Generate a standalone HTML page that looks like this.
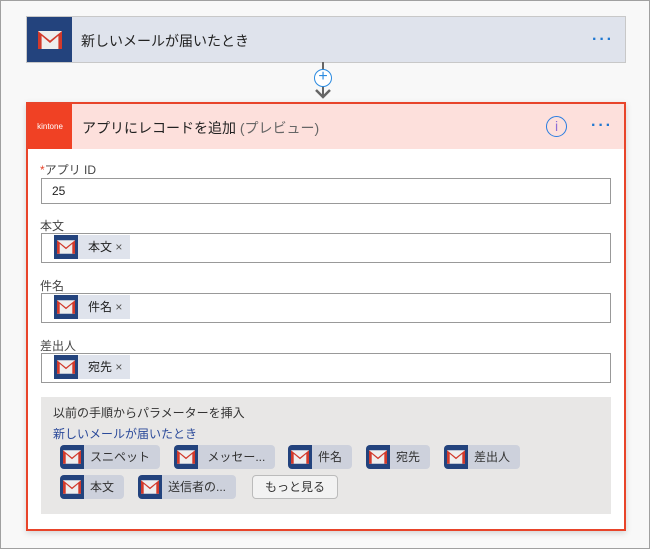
<!DOCTYPE html>
<html><head><meta charset="utf-8"><style>
*{box-sizing:border-box;margin:0;padding:0}
body{width:650px;height:549px;background:#f8f8f8;font-family:"Liberation Sans","Noto Sans CJK JP",sans-serif;position:relative;overflow:hidden;color:#222}
.abs{position:absolute}
.gm{display:inline-block;background:#23437d;position:relative}
.card1{left:26px;top:16px;width:600px;height:47px;background:#dfe3ec;border:1px solid #c8c8c8}
.dots{color:#1f78d1;font-size:16px;letter-spacing:2px;font-weight:bold}
.card2{left:26px;top:102px;width:600px;height:429px;background:#fff;border:2px solid #e8442a;box-shadow:0 2px 6px rgba(0,0,0,.15)}
.hdr{left:0;top:0;width:596px;height:45px;background:#fde0dc}
.lbl{font-size:12px;color:#444}
.inp{left:13px;width:570px;border:1px solid #999;background:#fff}
.tok{position:absolute;left:12px;top:1px;height:24px;background:#dfe3ec;font-size:12px;line-height:24px;padding-right:8px}
.tok .gm{width:24px;height:24px;vertical-align:top;margin-right:10px}
.chip{position:absolute;height:24px;background:#cdd1dc;border-radius:4px;font-size:12px;line-height:24px;color:#333;padding-right:10px;white-space:nowrap}
.chip .gm{width:24px;height:24px;border-radius:4px 0 0 4px;vertical-align:top;margin-right:6px}
</style></head><body>
<div class="abs" style="left:0;top:0;width:650px;height:549px;border:1px solid #a0a0a0"></div>
<svg width="0" height="0" style="position:absolute"><defs>
<g id="m"><rect x="0" y="0" width="20" height="15" fill="#eee"/><path d="M0 0 L10 8 L20 0 L20 15 L17 15 L17 4 L10 10 L3 4 L3 15 L0 15 Z" fill="#d23a2c"/></g></defs></svg>

<div class="abs card1">
 <div class="gm abs" style="left:0;top:0;width:45px;height:45px"><svg class="abs" style="left:11px;top:14px" width="24" height="18" viewBox="0 0 20 15"><use href="#m"/></svg></div>
 <div class="abs" style="left:54px;top:14px;font-size:14px">新しいメールが届いたとき</div>
 <div class="abs dots" style="left:565px;top:14px">···</div>
</div>
<div class="abs" style="left:322px;top:62px;width:2px;height:34px;background:#666"></div>
<div class="abs" style="left:314px;top:69px;width:18px;height:18px;border:1.5px solid #2a8ae0;border-radius:50%;background:#fff;color:#2a8ae0;font-size:16px;line-height:14px;text-align:center">+</div>
<svg class="abs" style="left:314px;top:88px" width="18" height="12"><path d="M2 2 L9 9 L16 2" stroke="#666" stroke-width="2.5" fill="none"/></svg>

<div class="abs card2">
 <div class="abs hdr">
  <div class="abs" style="left:0;top:0;width:44px;height:45px;background:#f04124;color:#fff;font-size:8px;line-height:45px;text-align:center">kintone</div>
  <div class="abs" style="left:54px;top:14px;font-size:14px">アプリにレコードを追加 <span style="color:#666">(プレビュー)</span></div>
  <div class="abs" style="left:518px;top:12px;width:21px;height:21px;border:1.5px solid #2a7de0;border-radius:50%;color:#8d6fd6;font-size:14px;line-height:18px;text-align:center">i</div>
  <div class="abs dots" style="left:563px;top:13px">···</div>
 </div>
 <div class="abs lbl" style="left:12px;top:57px"><span style="color:#e8442a">*</span>アプリ ID</div>
 <div class="abs inp" style="top:74px;height:26px;font-size:12px;line-height:24px;padding-left:10px">25</div>
 <div class="abs lbl" style="left:12px;top:113px">本文</div>
 <div class="abs inp" style="top:129px;height:30px"><div class="tok"><span class="gm"><svg style="position:absolute;left:3px;top:5px" width="18" height="14" viewBox="0 0 20 15"><use href="#m"/></svg></span>本文 <span style="color:#555">×</span></div></div>
 <div class="abs lbl" style="left:12px;top:173px">件名</div>
 <div class="abs inp" style="top:189px;height:30px"><div class="tok"><span class="gm"><svg style="position:absolute;left:3px;top:5px" width="18" height="14" viewBox="0 0 20 15"><use href="#m"/></svg></span>件名 <span style="color:#555">×</span></div></div>
 <div class="abs lbl" style="left:12px;top:233px">差出人</div>
 <div class="abs inp" style="top:249px;height:30px"><div class="tok"><span class="gm"><svg style="position:absolute;left:3px;top:5px" width="18" height="14" viewBox="0 0 20 15"><use href="#m"/></svg></span>宛先 <span style="color:#555">×</span></div></div>

 <div class="abs" style="left:13px;top:293px;width:570px;height:117px;background:#e8e7e6">
  <div class="abs lbl" style="left:12px;top:7px;color:#333">以前の手順からパラメーターを挿入</div>
  <div class="abs lbl" style="left:12px;top:28px;color:#2b4a9a">新しいメールが届いたとき</div>
  <div class="chip" style="left:19px;top:48px"><span class="gm"><svg style="position:absolute;left:3px;top:5px" width="18" height="14" viewBox="0 0 20 15"><use href="#m"/></svg></span>スニペット</div>
  <div class="chip" style="left:133px;top:48px"><span class="gm"><svg style="position:absolute;left:3px;top:5px" width="18" height="14" viewBox="0 0 20 15"><use href="#m"/></svg></span>&nbsp;メッセー...</div>
  <div class="chip" style="left:247px;top:48px"><span class="gm"><svg style="position:absolute;left:3px;top:5px" width="18" height="14" viewBox="0 0 20 15"><use href="#m"/></svg></span>件名</div>
  <div class="chip" style="left:325px;top:48px"><span class="gm"><svg style="position:absolute;left:3px;top:5px" width="18" height="14" viewBox="0 0 20 15"><use href="#m"/></svg></span>宛先</div>
  <div class="chip" style="left:403px;top:48px"><span class="gm"><svg style="position:absolute;left:3px;top:5px" width="18" height="14" viewBox="0 0 20 15"><use href="#m"/></svg></span>差出人</div>
  <div class="chip" style="left:19px;top:78px"><span class="gm"><svg style="position:absolute;left:3px;top:5px" width="18" height="14" viewBox="0 0 20 15"><use href="#m"/></svg></span>本文</div>
  <div class="chip" style="left:97px;top:78px"><span class="gm"><svg style="position:absolute;left:3px;top:5px" width="18" height="14" viewBox="0 0 20 15"><use href="#m"/></svg></span>送信者の...</div>
  <div class="abs" style="left:211px;top:78px;width:86px;height:24px;border:1px solid #bbb;border-radius:4px;background:#f2f2f2;font-size:12px;line-height:22px;text-align:center;color:#333">もっと見る</div>
 </div>
</div>
</body></html>
